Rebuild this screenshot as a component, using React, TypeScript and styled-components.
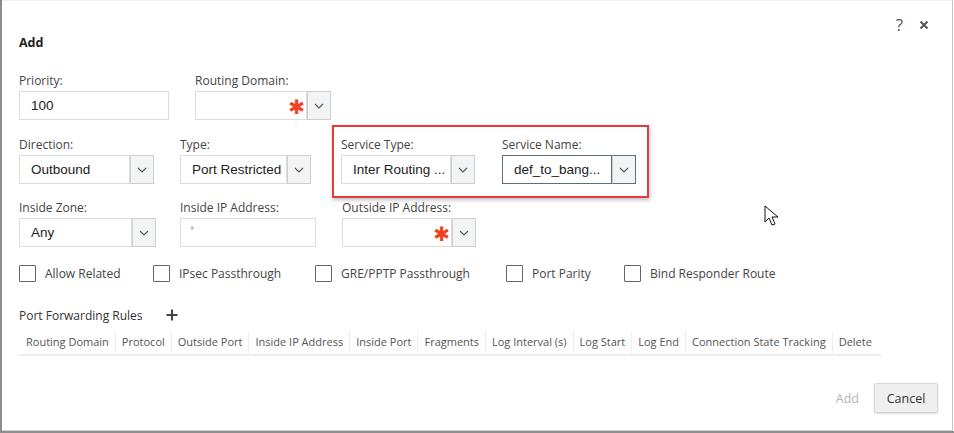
import React from "react";
import styled, { createGlobalStyle } from "styled-components";

const Global = createGlobalStyle`
  html, body { margin: 0; padding: 0; background: #fff; }
  body { font-family: "Open Sans", "Noto Sans", sans-serif; color: #333; }
`;

const Frame = styled.div`
  width: 954px;
  height: 433px;
  box-sizing: border-box;
  background: #fff;
  border-left: 2px solid #8d8d8d;
  border-bottom: 2px solid #8f8f8f;
  position: relative;
  overflow: hidden;
`;

const Dialog = styled.div`
  width: 951px;
  height: 431px;
  box-sizing: border-box;
  border-right: 1px solid #c4c4c4;
  border-top: 1px solid #f0f0f0;
  border-bottom: 1px solid #d0d0d0;
  padding: 0 0 0 17px;
  display: flex;
  flex-direction: column;
  position: relative;
`;

const TopIcons = styled.div`
  position: absolute;
  top: 15px;
  right: 23px;
  display: flex;
  gap: 16px;
  align-items: center;
  color: #555;
`;

const Help = styled.span`
  font-family: "Open Sans", sans-serif;
  font-size: 17px;
  color: #555;
  line-height: 1;
`;

const Title = styled.div`
  margin-top: 33px;
  font-size: 12.5px;
  font-weight: 700;
  color: #222;
  height: 18px;
  line-height: 18px;
`;

const Row = styled.div<{ $top: number }>`
  display: flex;
  margin-top: ${(p) => p.$top}px;
  align-items: flex-start;
`;

const Field = styled.div<{ $w: number }>`
  width: ${(p) => p.$w}px;
  display: flex;
  flex-direction: column;
`;

const Label = styled.div`
  font-size: 12px;
  color: #444;
  height: 17px;
  line-height: 17px;
  margin-bottom: 2px;
  white-space: nowrap;
`;

const Input = styled.div<{ $w: number; $dark?: boolean }>`
  width: ${(p) => p.$w}px;
  height: 29px;
  box-sizing: border-box;
  border: 1px solid ${(p) => (p.$dark ? "#5c6f7c" : "#dcdcdc")};
  background: #fff;
  display: flex;
  align-items: center;
  padding-left: 11px;
  font-family: "Liberation Sans", Arial, sans-serif;
  font-size: 13.5px;
  color: #222;
  position: relative;
  white-space: nowrap;
  overflow: hidden;
`;

const Placeholder = styled.span`
  color: #aaa;
  font-size: 11px;
  margin-top: -6px;
  margin-left: -2px;
`;

const Select = styled.div`
  display: flex;
  align-items: stretch;
`;

const DropBtn = styled.div<{ $dark?: boolean }>`
  width: 24px;
  height: 29px;
  box-sizing: border-box;
  border: 1px solid ${(p) => (p.$dark ? "#5c6f7c" : "#cfcfcf")};
  border-left: 1px solid #cfcfcf;
  background: #f3f4f5;
  display: flex;
  align-items: center;
  justify-content: center;
`;

const Star = styled.span`
  position: absolute;
  right: 1px;
  top: 5px;
  color: #f0421e;
  font-family: "DejaVu Sans", sans-serif;
  font-size: 20px;
  font-weight: 700;
  line-height: 1;
`;

const Highlight = styled.div`
  display: flex;
  margin-left: 11px;
  margin-top: -11px;
  padding: 9px 10px 12px 7px;
  border: 2px solid #e8393f;
  box-shadow: 1px 2px 4px rgba(0, 0, 0, 0.25);
`;

const CheckRow = styled.div`
  display: flex;
  align-items: center;
  margin-top: 17px;
  height: 18px;
`;

const Check = styled.label<{ $w: number }>`
  width: ${(p) => p.$w}px;
  display: flex;
  align-items: center;
  gap: 9px;
  font-size: 12px;
  color: #444;
  white-space: nowrap;
`;

const Box = styled.span`
  width: 15px;
  height: 15px;
  border: 1px solid #666;
  border-radius: 1px;
  background: #fff;
  flex: none;
`;

const Section = styled.div`
  display: flex;
  align-items: center;
  margin-top: 24px;
  height: 18px;
  font-size: 12px;
  color: #333;
  gap: 23px;
`;

const Table = styled.div`
  display: flex;
  width: 862px;
  margin-top: 6px;
  border-bottom: 2px solid #eeeeee;
  height: 24px;
  align-items: center;
`;

const Th = styled.div<{ $first?: boolean }>`
  font-size: 11px;
  color: #555;
  padding: 0 6px;
  height: 22px;
  line-height: 22px;
  border-left: ${(p) => (p.$first ? "none" : "1px solid #eeeeee")};
  white-space: nowrap;
  &:first-child {
    padding-left: 7px;
  }
`;

const Footer = styled.div`
  margin-top: auto;
  margin-bottom: 17px;
  display: flex;
  justify-content: flex-end;
  align-items: center;
  gap: 15px;
  padding-right: 14px;
`;

const GhostBtn = styled.span`
  font-size: 12.5px;
  color: #b5b5b5;
`;

const Button = styled.button`
  height: 30px;
  width: 64px;
  border: 1px solid #d6d6d6;
  background: #efefef;
  border-radius: 2px;
  box-shadow: 0 1px 2px rgba(0, 0, 0, 0.15);
  font-family: "Open Sans", sans-serif;
  font-size: 12.5px;
  color: #333;
  padding: 0;
`;

const Cursor = styled.svg`
  position: absolute;
  left: 762px;
  top: 205px;
`;

const Chevron = () => (
  <svg width="10" height="6" viewBox="0 0 10 6">
    <path d="M1 1 L5 5 L9 1" fill="none" stroke="#555" strokeWidth="1.1" />
  </svg>
);

const SelectBox = ({
  w,
  text,
  star,
  dark,
}: {
  w: number;
  text?: string;
  star?: boolean;
  dark?: boolean;
}) => (
  <Select>
    <Input $w={w} $dark={dark}>
      {text}
      {star && <Star>✱</Star>}
    </Input>
    <DropBtn $dark={dark}>
      <Chevron />
    </DropBtn>
  </Select>
);

const headers = [
  "Routing Domain",
  "Protocol",
  "Outside Port",
  "Inside IP Address",
  "Inside Port",
  "Fragments",
  "Log Interval (s)",
  "Log Start",
  "Log End",
  "Connection State Tracking",
  "Delete",
];

export default function App() {
  return (
    <>
      <Global />
      <Frame>
        <Dialog>
          <TopIcons>
            <Help>?</Help>
            <svg width="10" height="10" viewBox="0 0 10 10">
              <path d="M1.5 1.5 L8.5 8.5 M8.5 1.5 L1.5 8.5" stroke="#555" strokeWidth="2" />
            </svg>
          </TopIcons>
          <Title>Add</Title>

          <Row $top={20}>
            <Field $w={176}>
              <Label>Priority:</Label>
              <Input $w={150}>100</Input>
            </Field>
            <Field $w={160}>
              <Label>Routing Domain:</Label>
              <SelectBox w={112} star />
            </Field>
          </Row>

          <Row $top={16}>
            <Field $w={161}>
              <Label>Direction:</Label>
              <SelectBox w={111} text="Outbound" />
            </Field>
            <Field $w={141}>
              <Label>Type:</Label>
              <SelectBox w={107} text="Port Restricted" />
            </Field>
            <Highlight>
              <Field $w={161}>
                <Label>Service Type:</Label>
                <SelectBox w={110} text="Inter Routing ..." />
              </Field>
              <Field $w={135}>
                <Label>Service Name:</Label>
                <SelectBox w={110} text="def_to_bang..." dark />
              </Field>
            </Highlight>
          </Row>

          <Row $top={1}>
            <Field $w={161}>
              <Label>Inside Zone:</Label>
              <SelectBox w={113} text="Any" />
            </Field>
            <Field $w={162}>
              <Label>Inside IP Address:</Label>
              <Input $w={136}>
                <Placeholder>*</Placeholder>
              </Input>
            </Field>
            <Field $w={160}>
              <Label>Outside IP Address:</Label>
              <SelectBox w={110} star />
            </Field>
          </Row>

          <CheckRow>
            <Check $w={134}>
              <Box />
              Allow Related
            </Check>
            <Check $w={162}>
              <Box />
              IPsec Passthrough
            </Check>
            <Check $w={191}>
              <Box />
              GRE/PPTP Passthrough
            </Check>
            <Check $w={118}>
              <Box />
              Port Parity
            </Check>
            <Check $w={170}>
              <Box />
              Bind Responder Route
            </Check>
          </CheckRow>

          <Section>
            Port Forwarding Rules
            <svg width="12" height="12" viewBox="0 0 12 12">
              <path d="M6 0.5 V11.5 M0.5 6 H11.5" stroke="#444" strokeWidth="2" />
            </svg>
          </Section>

          <Table>
            {headers.map((h, i) => (
              <Th key={h} $first={i === 0}>
                {h}
              </Th>
            ))}
          </Table>

          <Footer>
            <GhostBtn>Add</GhostBtn>
            <Button>Cancel</Button>
          </Footer>
        </Dialog>
        <Cursor width="16" height="24" viewBox="0 0 16 24">
          <path
            d="M1 1 L1 17 L5 13 L8 20 L11 19 L8 12 L14 12 Z"
            fill="#fff"
            stroke="#111"
            strokeWidth="1"
            strokeLinejoin="miter"
          />
        </Cursor>
      </Frame>
    </>
  );
}
